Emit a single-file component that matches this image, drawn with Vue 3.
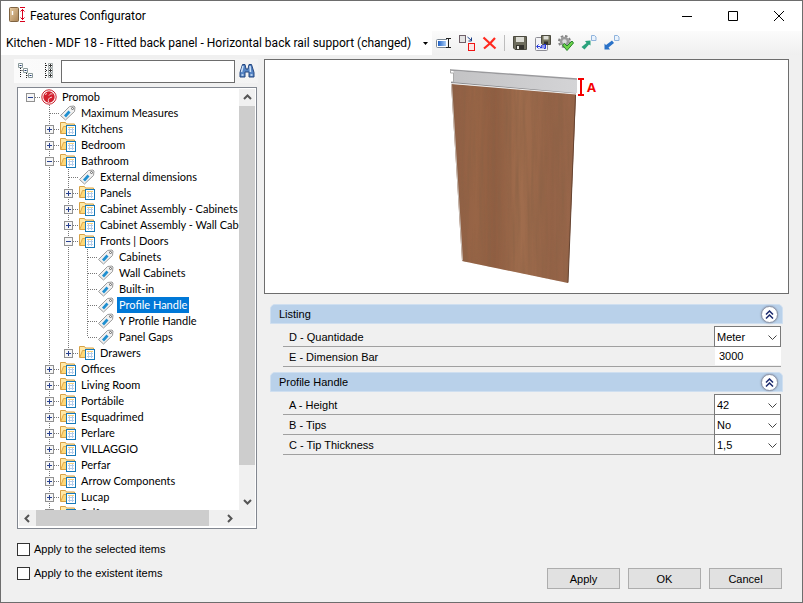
<template>
  <main class="window">
    <header class="titlebar">
      <svg class="app-icon" width="18" height="18" viewBox="0 0 18 18" aria-hidden="true">
        <defs>
          <linearGradient id="door" x1="0" y1="0" x2="1" y2="1">
            <stop offset="0" stop-color="#e8cda4" />
            <stop offset="1" stop-color="#a98253" />
          </linearGradient>
        </defs>
        <rect x="0.5" y="0.5" width="9" height="14" rx="1" fill="url(#door)" stroke="#7f6341" />
        <path d="M3.5 4v4" stroke="#fff" stroke-width="1.4" />
        <path d="M11 .5h5M11 14.5h5M13.5 2v11M11.500 4.500l2-2 2 2M11.500 10.500l2 2 2-2" fill="none" stroke="#d8001c" />
      </svg>
      <h1>Features Configurator</h1>
      <div class="window-buttons">
        <button type="button" aria-label="Minimize">
          <svg width="10" height="10" viewBox="0 0 10 10"><path d="M0 5.5h10" /></svg>
        </button>
        <button type="button" aria-label="Maximize">
          <svg width="10" height="10" viewBox="0 0 10 10"><path d="M.5 .5h9v9h-9z" /></svg>
        </button>
        <button type="button" aria-label="Close">
          <svg width="10" height="10" viewBox="0 0 10 10"><path d="M0 0l10 10M10 0L0 10" /></svg>
        </button>
      </div>
    </header>

    <nav class="toolbar" aria-label="Configuration">
      <div class="profile">
        <select v-model="profile" aria-label="Profile">
          <option>{{ profile }}</option>
        </select>
        <svg width="5" height="3" viewBox="0 0 5 3" aria-hidden="true"><path d="M0 0h5L2.5 3z" /></svg>
      </div>
      <button type="button" class="tool" aria-label="Rename">
        <svg width="16" height="16" viewBox="0 0 16 16">
          <defs>
            <linearGradient id="field"><stop offset="0" stop-color="#1d5fc4" /><stop offset="1" stop-color="#a9cdf7" /></linearGradient>
          </defs>
          <path d="M11 4.500H1.500a1 1 0 0 0-1 1v6a1 1 0 0 0 1 1H11" fill="#fff" stroke="#7b8793" />
          <rect x="2" y="6" width="8" height="5" fill="url(#field)" />
          <path d="M10 3.500h5M10 12.500h5M12.500 4v8" fill="none" stroke="#222" />
        </svg>
      </button>
      <button type="button" class="tool" aria-label="Replace">
        <svg width="16" height="16" viewBox="0 0 16 16">
          <rect x="0.500" y="0.500" width="6" height="7" fill="#e4e4e4" stroke="#6e5f68" />
          <rect x="9.500" y="8.500" width="6" height="7" fill="#fbe7e7" stroke="#f01414" />
          <path d="M8.500 2l4 3.500M12.500 2.500v3.500H9.500" fill="none" stroke="#1b3f87" />
        </svg>
      </button>
      <button type="button" class="tool" aria-label="Delete">
        <svg width="16" height="16" viewBox="0 0 16 16">
          <path d="M1.500 2.500L8 8.500l5-5.500M2 13.500L8 8.500l5.500 5" fill="none" stroke="#ff2a20" stroke-width="2.200" />
        </svg>
      </button>
      <span class="separator"></span>
      <button type="button" class="tool" aria-label="Save">
        <svg width="16" height="16" viewBox="0 0 16 16">
          <path d="M1.500 1.500h13v13H3l-1.500-1.500z" fill="#6d6c5c" stroke="#4c4b40" />
          <path d="M4 2h8v5H4z" fill="#ddddd5" />
          <path d="M4 10h8v4.500H4z" fill="#33322c" /><path d="M5 11h2v3H5z" fill="#e8e8e0" />
        </svg>
      </button>
      <button type="button" class="tool" aria-label="Save as">
        <svg width="16" height="16" viewBox="0 0 16 16">
          <rect x="0.500" y="2.500" width="12" height="13" rx="1" fill="#f4f4f6" stroke="#8c8c94" />
          <path d="M6.500 .5h9v9h-8l-1-1z" fill="#77765f" stroke="#4c4b40" />
          <path d="M8.500 1h5v3.500h-5z" fill="#ddddd5" /><path d="M9 6.500h4v3H9z" fill="#33322c" />
          <path d="M3.500 9.500L1.500 11.500l2 2M5 13.500l2-3.500v3.500M5.500 12.500h1.500M9 9.500v4h1.500v-4zM2 11.500h3" fill="none" stroke="#2437dc" />
        </svg>
      </button>
      <button type="button" class="tool" aria-label="Validate">
        <svg width="16" height="16" viewBox="0 0 16 16">
          <circle cx="6.500" cy="6.500" r="5.500" fill="none" stroke="#858585" stroke-width="2" stroke-dasharray="2.500 1.800" />
          <circle cx="6.500" cy="6.500" r="3.500" fill="#ddd" stroke="#9a9a9a" stroke-width="2.500" />
          <path d="M4.500 10l2-1.500 2.500 2.500 5-5 1.500 2-6.500 7.500z" fill="#6fd34b" stroke="#24842a" />
        </svg>
      </button>
      <button type="button" class="tool" aria-label="Export">
        <svg width="16" height="16" viewBox="0 0 16 16">
          <path d="M10.500 .5h3l1.500 1.500v3.500h-4.500z" fill="#eaf3fd" stroke="#8fb3dc" />
          <path d="M9.500 5.500v5L8 9.500l-4.500 5L.5 12l5-4-1.500-2z" fill="#2aa27c" />
        </svg>
      </button>
      <button type="button" class="tool" aria-label="Import">
        <svg width="16" height="16" viewBox="0 0 16 16">
          <path d="M10.500 .5h3l1.500 1.500v3.500h-4.500z" fill="#eaf3fd" stroke="#8fb3dc" />
          <path d="M.5 14.500v-6L2 10l6-4.500 2 2.500-5.500 4.500 1.500 2z" fill="#2a72c8" />
        </svg>
      </button>
    </nav>

    <div class="body">
      <section class="side">
        <div class="search">
          <button type="button" class="tool" aria-label="Collapse all">
            <svg width="16" height="16" viewBox="0 0 16 16">
              <path d="M2.500 5v9M2.500 7.500H6M8.500 10v5M8.500 12.500H11" fill="none" stroke="#222" stroke-dasharray="1 1" />
              <path d="M.5 .5h4v4h-4zM5.500 5.500h4v4h-4zM10.500 10.500h4v4h-4z" fill="#fff" stroke="#8a9a9a" />
              <path d="M1.500 2.500h2M6.500 7.500h2M11.500 12.500h2" stroke="#203a70" />
            </svg>
          </button>
          <button type="button" class="tool" aria-label="Expand all">
            <svg width="16" height="16" viewBox="0 0 16 16">
              <path d="M4.500 0v16M5 2.500h3M5 7.500h3M5 12.500h3" fill="none" stroke="#222" stroke-dasharray="1 1" />
              <path d="M7.500 .5h4v4h-4zM7.500 5.500h4v4h-4zM7.500 10.500h4v4h-4z" fill="#fff" stroke="#a5adad" />
              <path d="M8 2.500h3M8 7.500h3M8 12.500h3M9.500 1v3M9.500 6v3M9.500 11v3" stroke="#333" />
            </svg>
          </button>
          <input v-model.trim="query" type="text" aria-label="Search features" autocomplete="off" />
          <button type="button" class="tool" aria-label="Find">
            <svg width="16" height="16" viewBox="0 0 16 16">
              <path d="M3.500 1.500h2.500l1 4.500h2l1-4.500h2.500l2.500 8v4.500h-5v-5h-4v5h-5V9.500z" fill="#5584c4" stroke="#24467f" />
              <path d="M4 3L2.500 9M11 3l.5 6M2.500 12h2M11.500 12h2" stroke="#cfe2f7" stroke-width="1.500" />
            </svg>
          </button>
        </div>

        <div class="tree-box">
          <ul class="tree" role="tree" aria-label="Features">
            <li v-for="row in rows" :key="row.id" class="row" role="treeitem" :aria-selected="row.id === selected">
              <svg v-for="(cell, i) in row.cells" :key="i" class="cell" width="19" height="16" viewBox="0 0 19 16">
                <g fill="none" stroke="#777" stroke-dasharray="1 1">
                  <path v-if="cell.up" d="M9.500 0v8" />
                  <path v-if="cell.down" d="M9.500 8v8" />
                  <path v-if="cell.branch" d="M10 8.500h9" />
                </g>
                <g v-if="cell.box">
                  <rect x="5.500" y="4.500" width="8" height="8" fill="#f6f6f6" stroke="#919191" />
                  <path d="M7 8.500h5" stroke="#27408f" />
                  <path v-if="cell.box === 'plus'" d="M9.500 6v5" stroke="#27408f" />
                </g>
              </svg>

              <svg v-if="row.kind === 'root'" class="cell" width="19" height="16" viewBox="0 0 19 16">
                <circle cx="9" cy="8" r="7.200" fill="#fff" stroke="#c9202c" />
                <circle cx="9" cy="8" r="5.700" fill="#d21f2d" />
                <path d="M8.500 13c-.5-2 0-3 1-4l2.500-1M9 6.500c1-1.500 2-2 3.500-1.500M5 5.500l2-1" fill="none" stroke="#fbdcdc" />
              </svg>
              <svg v-else-if="row.kind === 'tag'" class="cell" width="19" height="16" viewBox="0 0 19 16">
                <path d="M1.500 10.500L10.500 1.500l4.500-.5 1 1-.5 4.500L6.500 15z" fill="#f1f1f1" stroke="#9a9a9a" />
                <path d="M5 10.500l4.500-5 2 2-4.500 5z" fill="#1f8fd0" />
                <circle cx="13.500" cy="3.500" r="1" fill="#fff" stroke="#666" />
              </svg>
              <svg v-else class="cell" width="19" height="16" viewBox="0 0 19 16">
                <path d="M1.500 12.500v-11h5l1 1.500h8v9.500z" fill="#ffe9a8" stroke="#d7a145" />
                <path d="M2.500 12l2-6.500h11V12z" fill="#ffd978" />
                <path d="M2 12l2.500-6.500H15" fill="none" stroke="#e0ab4c" />
                <rect x="7.500" y="4.500" width="9" height="10" fill="#fff" stroke="#1779b8" />
                <path d="M9 8.500h6M9 11.500h6M10.500 7v6M13.500 7v6" stroke="#b4cdea" />
                <path d="M9 6.500h6" stroke="#f8d27a" />
              </svg>
              <span class="name" :class="{ selected: row.id === selected }" @click="selected = row.id">{{ row.name }}</span>
            </li>
          </ul>
          <div class="vbar">
            <svg width="9" height="6" viewBox="0 0 9 6"><path d="M1 5l3.500-3.500L8 5" /></svg>
            <span class="thumb"></span>
            <svg width="9" height="6" viewBox="0 0 9 6"><path d="M1 1l3.500 3.500L8 1" /></svg>
          </div>
          <div class="hbar">
            <svg width="6" height="9" viewBox="0 0 6 9"><path d="M5 1L1.500 4.500 5 8" /></svg>
            <span class="thumb"></span>
            <svg width="6" height="9" viewBox="0 0 6 9"><path d="M1 1l3.500 3.500L1 8" /></svg>
          </div>
        </div>

        <div class="checks">
          <label><input v-model="applySelected" type="checkbox" />Apply to the selected items</label>
          <label><input v-model="applyExistent" type="checkbox" />Apply to the existent items</label>
        </div>
      </section>

      <section class="detail">
        <div class="preview">
          <svg width="523" height="233" viewBox="265 60 523 233" role="img" aria-label="Door with profile handle">
            <defs>
              <linearGradient id="wood">
                <stop offset="0" stop-color="#8f5f45" />
                <stop offset="0.200" stop-color="#986546" />
                <stop offset="0.350" stop-color="#905e42" />
                <stop offset="0.550" stop-color="#a06d4d" />
                <stop offset="0.800" stop-color="#946347" />
                <stop offset="1" stop-color="#99674b" />
              </linearGradient>
              <linearGradient id="metal">
                <stop offset="0" stop-color="#c3c3c5" />
                <stop offset="1" stop-color="#d4d4d6" />
              </linearGradient>
              <filter id="grain" x="0" y="0" width="1" height="1">
                <feTurbulence type="fractalNoise" baseFrequency="0.250 0.012" numOctaves="3" seed="4" />
                <feColorMatrix values="0 0 0 0 0.250  0 0 0 0 0.120  0 0 0 0 0.060  2 0 0 0 -0.700" />
              </filter>
              <clipPath id="panel"><path d="M452 83l124 11-8 189-106-22z" /></clipPath>
            </defs>
            <path d="M451 83l125 11-8 189-106-22z" fill="url(#wood)" />
            <g clip-path="url(#panel)"><rect x="450" y="80" width="128" height="205" filter="url(#grain)" opacity="0.600" /></g>
            <path d="M451.500 84l11 176.500" stroke="#c8beb6" />
            <path d="M575.500 95l-7.500 187.500" stroke="#654331" />
            <path d="M453.500 71L577 79v14L453.500 84z" fill="url(#metal)" />
            <path d="M450.500 70l126.500 9" fill="none" stroke="#9a9a9d" stroke-width="1.500" />
            <path d="M450.500 69v4h3v9h-2.500" fill="none" stroke="#aaa" />
            <path d="M451 82.500l125 11" fill="none" stroke="#8a8a8d" />
            <path d="M451 83.500l125 10.500" fill="none" stroke="#eee" />
            <path d="M578 79h6M578 95h6M581 79v16" stroke="#f40000" stroke-width="2" />
            <text x="587" y="92" class="mark">A</text>
          </svg>
        </div>

        <div class="groups">
          <section v-for="group in groups" :key="group.title" class="group">
            <header class="group-head">
              <h2>{{ group.title }}</h2>
              <button type="button" :aria-label="'Collapse ' + group.title" @click="group.open = !group.open">
                <svg width="9" height="9" viewBox="0 0 9 9"><path d="M1 4.500L4.500 1 8 4.500M1 8.500L4.500 5 8 8.500" /></svg>
              </button>
            </header>
            <div v-if="group.open" class="fields">
              <div v-for="field in group.fields" :key="field.id" class="field">
                <label :for="field.id">{{ field.label }}</label>
                <div v-if="field.options" class="pick">
                  <select :id="field.id" v-model="field.value">
                    <option v-for="o in field.options" :key="o">{{ o }}</option>
                  </select>
                  <svg width="9" height="5" viewBox="0 0 9 5" aria-hidden="true"><path d="M.5 .5l4 4 4-4" /></svg>
                </div>
                <input v-else :id="field.id" v-model="field.value" type="text" />
              </div>
            </div>
          </section>
        </div>

        <footer class="actions">
          <button type="button">Apply</button>
          <button type="button">OK</button>
          <button type="button">Cancel</button>
        </footer>
      </section>
    </div>
  </main>
</template>

<script setup>
import { computed, reactive, ref } from "vue";

const profile = ref("Kitchen - MDF 18 - Fitted back panel - Horizontal back rail support (changed)");
const query = ref("");
const applySelected = ref(false);
const applyExistent = ref(false);
const selected = ref("Promob/Bathroom/Fronts | Doors/Profile Handle");

const tag = (name) => ({ name, kind: "tag" });
const folder = (name, children) => ({ name, kind: "folder", children });

const tree = {
  name: "Promob",
  kind: "root",
  children: [
    tag("Maximum Measures"),
    folder("Kitchens"),
    folder("Bedroom"),
    folder("Bathroom", [
      tag("External dimensions"),
      folder("Panels"),
      folder("Cabinet Assembly - Cabinets"),
      folder("Cabinet Assembly - Wall Cabinets"),
      folder("Fronts | Doors", [
        tag("Cabinets"),
        tag("Wall Cabinets"),
        tag("Built-in"),
        tag("Profile Handle"),
        tag("Y Profile Handle"),
        tag("Panel Gaps"),
      ]),
      folder("Drawers"),
    ]),
    folder("Offices"),
    folder("Living Room"),
    folder("Portábile"),
    folder("Esquadrimed"),
    folder("Perlare"),
    folder("VILLAGGIO"),
    folder("Perfar"),
    folder("Arrow Components"),
    folder("Lucap"),
    folder("Self"),
  ],
};

// one list entry per visible node, with the guide cells drawn before its icon
function flatten(node, guides, last, path) {
  const root = node.kind === "root";
  const own = {
    up: !root,
    down: !root && !last,
    branch: true,
    box: node.kind === "tag" ? "" : node.children ? "minus" : "plus",
  };
  const id = path + node.name;
  const out = [{ id, name: node.name, kind: node.kind, cells: [...guides, own] }];
  const line = !root && !last;
  const kids = node.children || [];
  kids.forEach((kid, i) => {
    out.push(...flatten(kid, [...guides, { up: line, down: line }], i === kids.length - 1, id + "/"));
  });
  return out;
}

const rows = computed(() => flatten(tree, [], true, ""));

const groups = reactive([
  {
    title: "Listing",
    open: true,
    fields: [
      { id: "quantity", label: "D - Quantidade", value: "Meter", options: ["Meter", "Unit"] },
      { id: "bar", label: "E - Dimension Bar", value: "3000" },
    ],
  },
  {
    title: "Profile Handle",
    open: true,
    fields: [
      { id: "height", label: "A - Height", value: "42", options: ["42"] },
      { id: "tips", label: "B - Tips", value: "No", options: ["No", "Yes"] },
      { id: "thickness", label: "C - Tip Thickness", value: "1,5", options: ["1,5"] },
    ],
  },
]);
</script>

<style>
body {
  margin: 0;
}
</style>

<style scoped>
* {
  box-sizing: border-box;
}

.window {
  display: flex;
  flex-direction: column;
  height: 100vh;
  border: 1px solid #6d6d6d;
  background: #f0f0f0;
  color: #000;
  font-family: "Liberation Sans", Arial, sans-serif;
  font-size: 11px;
}

button,
input,
select {
  margin: 0;
  padding: 0;
  border: 0;
  background: none;
  color: inherit;
  font: inherit;
}

svg {
  display: block;
  flex: none;
}

.titlebar {
  display: flex;
  align-items: center;
  height: 30px;
  padding-left: 8px;
  background: #fff;
}

h1 {
  flex: 1;
  margin: 0 0 0 3px;
  font: 12px Roboto, sans-serif;
}

.window-buttons {
  display: flex;
}

.window-buttons button {
  display: grid;
  place-items: center;
  width: 46px;
  height: 30px;
}

.window-buttons path {
  fill: none;
  stroke: #000;
}

.toolbar {
  display: flex;
  align-items: center;
  height: 24px;
  background: linear-gradient(#fbfbfb, #efefef);
}

.tool {
  display: grid;
  flex: none;
  place-items: center;
  width: 23px;
  height: 22px;
}

.profile {
  position: relative;
  width: 431px;
  height: 24px;
  background: #fff;
}

.profile select {
  width: 100%;
  height: 24px;
  padding-left: 5px;
  appearance: none;
  font: 12px Roboto, sans-serif;
}

.profile svg {
  position: absolute;
  top: 11px;
  right: 4px;
}

.separator {
  width: 1px;
  height: 16px;
  margin: 0 3px;
  background: #bdbdbd;
}

.body {
  display: grid;
  flex: 1;
  grid-template-columns: 244px 1fr;
  gap: 6px;
  min-height: 0;
  padding: 4px 13px;
}

.side {
  display: flex;
  flex-direction: column;
  min-height: 0;
}

.search {
  display: flex;
  align-items: center;
  height: 24px;
  background: linear-gradient(90deg, #fbfbfb, #f3f3f3);
}

.search input {
  flex: 1;
  min-width: 0;
  height: 23px;
  margin-left: 1px;
  padding: 0 4px;
  border: 1px solid #6d6d6d;
  background: #fff;
}

.tree-box {
  display: grid;
  flex: 1;
  grid-template-columns: 1fr 16px;
  grid-template-rows: 1fr 16px;
  min-height: 0;
  margin: 4px 1px 0 3px;
  padding: 1px 1px 2px;
  border: 1px solid #828790;
  background: #fff;
}

.tree {
  min-width: 0;
  margin: 0;
  padding: 0 0 0 2px;
  overflow: hidden;
  list-style: none;
  font-family: Lato, sans-serif;
}

.row {
  display: flex;
  height: 16px;
}

.name {
  margin-left: 1px;
  padding: 0 2px;
  line-height: 16px;
  white-space: nowrap;
  cursor: default;
}

.selected {
  background: #0078d7;
  color: #fff;
}

.vbar,
.hbar {
  display: flex;
  align-items: center;
  justify-content: space-between;
  background: #f0f0f0;
}

.vbar {
  flex-direction: column;
  padding: 5px 0;
}

.hbar {
  grid-column: 1 / 3;
  padding: 0 22px 0 5px;
}

.vbar path,
.hbar path {
  fill: none;
  stroke: #555;
  stroke-width: 2;
}

.thumb {
  background: #cdcdcd;
}

.vbar .thumb {
  flex: 1;
  width: 16px;
  margin: 6px 0 34px;
}

.hbar .thumb {
  flex: 1;
  height: 16px;
  margin: 0 18px 0 6px;
}

.checks {
  display: flex;
  flex-direction: column;
  gap: 8px;
  padding: 12px 0 17px 3px;
}

.checks label {
  display: flex;
  align-items: center;
  gap: 4px;
  height: 16px;
}

.checks input {
  width: 13px;
  height: 13px;
  appearance: none;
  border: 1px solid #333;
  background: #fff;
}

.checks input:checked {
  background: #0078d7;
}

.detail {
  display: flex;
  flex-direction: column;
  min-width: 0;
}

.preview {
  display: flex;
  justify-content: center;
  overflow: hidden;
  border: 1px solid #6d6d6d;
  background: #fff;
}

.mark {
  fill: #f40000;
  font: bold 13px "Open Sans", sans-serif;
}

.groups {
  display: flex;
  flex-direction: column;
  gap: 5px;
  padding: 10px 6px 0;
}

.group-head {
  display: flex;
  align-items: center;
  height: 20px;
  padding: 0 4px 0 8px;
  border: 1px solid #cfdff0;
  border-radius: 5px 5px 0 0;
  background: #b9d1ea;
}

h2 {
  flex: 1;
  margin: 0;
  font-size: 11px;
  font-weight: normal;
}

.group-head button {
  display: grid;
  flex: none;
  place-items: center;
  width: 17px;
  height: 17px;
  border: 1px solid #8c95a8;
  border-radius: 50%;
  background: #fff;
  box-shadow: 0 0 2px #7d89a0;
}

.group-head path {
  fill: none;
  stroke: #1c2a6e;
  stroke-width: 1.5;
}

.fields {
  padding: 3px 2px 0 13px;
}

.field {
  display: flex;
  height: 20px;
  border-bottom: 1px solid #a0a0a0;
}

.field label {
  flex: 1;
  padding-left: 6px;
  line-height: 20px;
}

.pick {
  position: relative;
  width: 67px;
}

.pick select {
  width: 100%;
  height: 21px;
  margin-top: -1px;
  padding-left: 2px;
  appearance: none;
  border: 1px solid #7a7a7a;
  border-radius: 0;
  background: #fff;
}

.pick svg {
  position: absolute;
  top: 8px;
  right: 4px;
}

.pick path {
  fill: none;
  stroke: #444;
}

.field > input {
  width: 66px;
  height: 18px;
  padding-left: 4px;
  background: #fff;
}

.actions {
  display: flex;
  justify-content: flex-end;
  gap: 8px;
  margin-top: auto;
  padding: 0 7px 9px 0;
}

.actions button {
  width: 73px;
  height: 21px;
  border: 1px solid #adadad;
  background: #e1e1e1;
}
</style>
